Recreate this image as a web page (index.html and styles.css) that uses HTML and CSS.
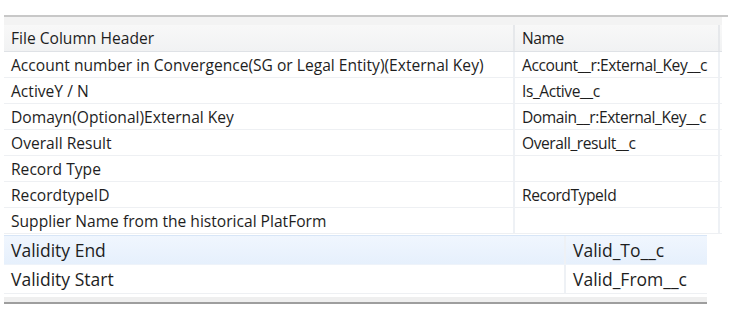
FILE: index.html
```html
<!DOCTYPE html>
<html>
<head>
<meta charset="utf-8">
<link rel="stylesheet" href="styles.css">
</head>
<body>
<div class="page">
  <div class="grid top">
    <div class="topline"></div>
    <div class="band"></div>
    <div class="row head"><div class="c1">File Column Header</div><div class="c2">Name</div></div>
    <div class="row"><div class="c1">Account number in Convergence(SG or Legal Entity)(External Key)</div><div class="c2">Account__r:External_Key__c</div></div>
    <div class="row"><div class="c1">ActiveY / N</div><div class="c2">Is_Active__c</div></div>
    <div class="row"><div class="c1">Domayn(Optional)External Key</div><div class="c2">Domain__r:External_Key__c</div></div>
    <div class="row"><div class="c1">Overall Result</div><div class="c2">Overall_result__c</div></div>
    <div class="row"><div class="c1">Record Type</div><div class="c2"></div></div>
    <div class="row"><div class="c1">RecordtypeID</div><div class="c2">RecordTypeId</div></div>
    <div class="row"><div class="c1">Supplier Name from the historical PlatForm</div><div class="c2"></div></div>
  </div>
  <div class="grid bottom">
    <div class="row sel"><div class="c1">Validity End</div><div class="c2">Valid_To__c</div></div>
    <div class="row"><div class="c1">Validity Start</div><div class="c2">Valid_From__c</div></div>
    <div class="band2"></div>
    <div class="botline"></div>
  </div>
</div>
</body>
</html>
```
FILE: styles.css
```css
html, body { margin: 0; padding: 0; background: #fff; }
body { font-family: "Open Sans", "Noto Sans", sans-serif; color: #1e1e1e; }
.page { padding: 15px 0 0 4px; }
.grid { display: flex; flex-direction: column; }
.top { width: 724px; }
.topline { height: 2px; background: #c8c8c8; }
.band { height: 8px; background: #f3f3f3; margin-right: 6px; }
.top .row { display: flex; height: 25px; border-bottom: 1px solid #eef0f3; margin-right: 6px; font-size: 15.6px; line-height: 27px; }
.top .row.head { background: linear-gradient(#f8f8f8, #f1f2f3); border-bottom: 1px solid #dfe2e6; height: 26px; line-height: 27px; }
.top .row > div { box-sizing: border-box; padding-left: 7px; white-space: nowrap; overflow: hidden; }
.top .c1 { width: 511px; border-right: 2px solid #eef1f5; }
.top .c2 { width: 205px; border-right: 2px solid #eef1f5; letter-spacing: -0.45px; }
.top .row.head .c1, .top .row.head .c2 { border-right-color: #e6e8eb; }
.bottom { width: 703px; margin-top: 1px; }
.bottom .row { display: flex; height: 28px; font-size: 17.5px; line-height: 28px; border-bottom: 1px solid #eef0f3; }
.bottom .row.sel { background: linear-gradient(#f0f6fe, #e6f0fc); border-top: 1px solid #d8e6f7; border-bottom: 1px solid #eef3fa; height: 28px; }
.bottom .row > div { box-sizing: border-box; padding-left: 7px; white-space: nowrap; }
.bottom .c1 { width: 562px; border-right: 2px solid #eef1f5; }
.bottom .c2 { width: 141px; }
.band2 { height: 5px; background: #efefef; margin-top: 3px; }
.botline { height: 2px; background: #9e9e9e; }
```
